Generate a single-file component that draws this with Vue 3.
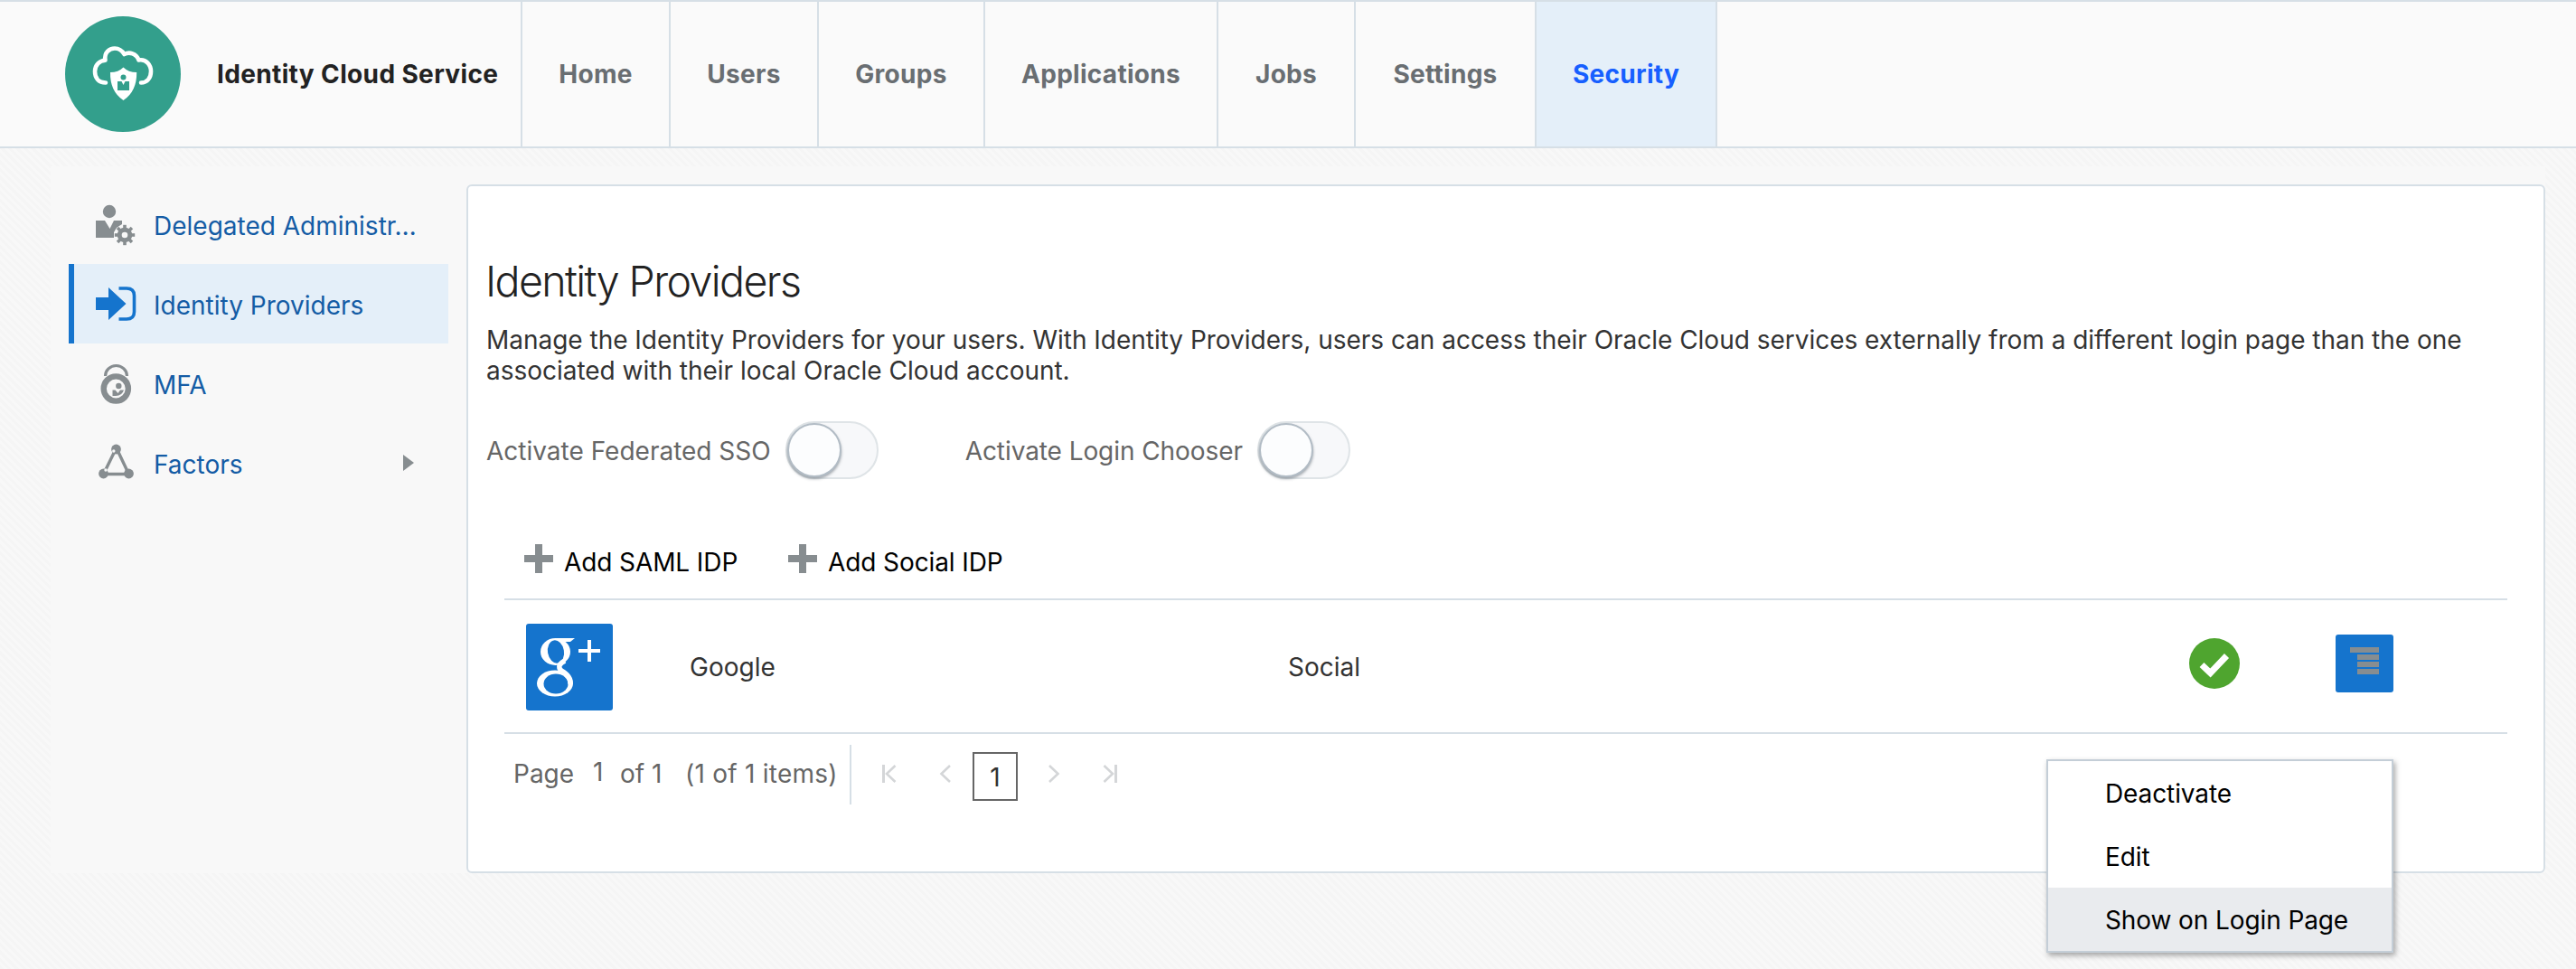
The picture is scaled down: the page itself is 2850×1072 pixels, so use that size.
<script setup>
const tabs = [
  { label: 'Home', w: 164 },
  { label: 'Users', w: 164 },
  { label: 'Groups', w: 184 },
  { label: 'Applications', w: 258 },
  { label: 'Jobs', w: 152 },
  { label: 'Settings', w: 200 },
  { label: 'Security', w: 200, active: true },
]
const side = [
  { label: 'Delegated Administr…', icon: 'admin' },
  { label: 'Identity Providers', icon: 'idp', active: true },
  { label: 'MFA', icon: 'mfa' },
  { label: 'Factors', icon: 'factors', more: true },
]
const toggles = ['Activate Federated SSO', 'Activate Login Chooser']
const menu = ['Deactivate', 'Edit', 'Show on Login Page']
const teeth = [0, 45, 90, 135, 180, 225, 270, 315]
</script>

<template>
  <div class="page">
    <header class="header">
      <div class="brand">
        <svg class="logo" viewBox="0 0 128 128">
          <circle cx="64" cy="64" r="64" fill="#339f8c" />
          <path d="M45 73.500C37 73.500 33 68 33 61C33 54 38 49 44.500 48.700C43 40 49 35.500 55 35.500C60 35.500 63 38 65.500 42C71 39 79 41 81.500 48.500C90 47 95 54 95 61C95 68 91 73.500 84 73.500" fill="none" stroke="#fff" stroke-width="4.600" stroke-linecap="round" stroke-linejoin="round" />
          <path d="M64.500 56.500Q70 62 79.200 62Q79.500 83 64.500 93Q49.500 83 50 62Q59 62 64.500 56.500Z" fill="#fff" />
          <circle cx="64.500" cy="67.500" r="3" fill="#339f8c" />
          <path d="M58 72H62.500L64.500 76L66.500 72H71V82H58Z" fill="#339f8c" />
        </svg>
        <span class="brand-name">Identity Cloud Service</span>
      </div>
      <nav class="tabs">
        <a v-for="t in tabs" :key="t.label" class="tab" :class="{ active: t.active }" :style="{ width: t.w + 'px' }">{{ t.label }}</a>
      </nav>
    </header>

    <div class="body">
      <aside class="side">
        <div v-for="s in side" :key="s.label" class="side-item" :class="{ active: s.active }">
          <svg v-if="s.icon === 'admin'" class="side-icon" viewBox="0 0 48 48" fill="#878d90">
            <circle cx="17" cy="10" r="7.200" />
            <path d="M2 20H12L17.500 29L22 20H31V24L25 28L22 33V39H2Z" />
            <g transform="translate(34 36)">
              <circle r="11.500" fill="#f8f8f8" />
              <circle r="5.800" fill="none" stroke="#878d90" stroke-width="5" />
              <rect v-for="a in teeth" :key="a" x="-1.800" y="-11.200" width="3.600" height="4" :transform="`rotate(${a})`" />
            </g>
          </svg>
          <svg v-else-if="s.icon === 'idp'" class="side-icon" viewBox="0 0 48 48">
            <path d="M2 17H16V6L35.500 24L16 42V31H2Z" fill="#1574cd" />
            <path d="M27.500 7H36Q44.500 7 44.500 15V33Q44.500 41 36 41H27.500" fill="none" stroke="#1574cd" stroke-width="3.600" />
          </svg>
          <svg v-else-if="s.icon === 'mfa'" class="side-icon" viewBox="0 0 48 48">
            <path d="M12.500 16A12 11.500 0 0 1 36.500 16" fill="none" stroke="#878d90" stroke-width="3.200" />
            <circle cx="24.300" cy="30" r="13.600" fill="#f8f8f8" stroke="#878d90" stroke-width="6.400" />
            <circle cx="27.300" cy="27" r="3.200" fill="#878d90" />
            <path d="M20.500 31.500H23.500L26.500 35L29 31.500H33Q31 38 24 38H20.500Z" fill="#878d90" />
          </svg>
          <svg v-else class="side-icon" viewBox="0 0 48 48">
            <path d="M24.500 8L11 35.500M25 8L38 35.500M11 36.500H38" fill="none" stroke="#878d90" stroke-width="3.400" />
            <circle cx="24.500" cy="9" r="5.400" fill="#878d90" />
            <circle cx="10.500" cy="36" r="5.400" fill="#878d90" />
            <circle cx="38.500" cy="36" r="5.400" fill="#878d90" />
            <circle cx="21.800" cy="11" r="1.700" fill="#f8f8f8" />
            <circle cx="13" cy="32" r="1.700" fill="#f8f8f8" />
          </svg>
          <span class="side-label">{{ s.label }}</span>
          <svg v-if="s.more" class="more" viewBox="0 0 12 18"><path d="M0 0L12 9L0 18Z" fill="#878d90" /></svg>
        </div>
      </aside>

      <main class="panel">
        <h1>Identity Providers</h1>
        <p class="desc">Manage the Identity Providers for your users. With Identity Providers, users can access their Oracle Cloud services externally from a different login page than the one<br>associated with their local Oracle Cloud account.</p>
        <div class="toggles">
          <label v-for="t in toggles" :key="t" class="toggle-field">
            <span>{{ t }}</span>
            <i class="switch"><b class="knob"></b></i>
          </label>
        </div>

        <section class="list">
          <div class="toolbar">
            <a class="add add1"><i class="plus"></i><span>Add SAML IDP</span></a>
            <a class="add"><i class="plus"></i><span>Add Social IDP</span></a>
          </div>
          <div class="row">
            <svg class="gplus" viewBox="0 0 96 96">
              <rect width="96" height="96" rx="3" fill="#1574cd" />
              <ellipse cx="32.500" cy="31" rx="16.500" ry="15" fill="#fff" />
              <ellipse cx="33" cy="31" rx="9" ry="12.800" fill="#1574cd" transform="rotate(-10 33 31)" />
              <path d="M32 16H54L49 20H39Z" fill="#fff" />
              <ellipse cx="32" cy="66" rx="20" ry="14.500" fill="#fff" />
              <ellipse cx="33" cy="66.500" rx="13.500" ry="11" fill="#1574cd" />
              <path d="M43 41Q33 46 39 52Q50 58 49 67" fill="none" stroke="#fff" stroke-width="5.500" />
              <path d="M58 30H82M70 18V42" fill="none" stroke="#fff" stroke-width="4" />
            </svg>
            <span class="c-name">Google</span>
            <span class="c-type">Social</span>
            <svg class="check" viewBox="0 0 56 56">
              <circle cx="28" cy="28" r="28" fill="#4fa52f" />
              <path d="M14 29.500L23.500 38.500L41.500 19.500" fill="none" stroke="#fff" stroke-width="7" />
            </svg>
            <span class="menu-btn"><i></i><i></i><i></i><i></i></span>
          </div>
          <div class="pager">
            <span class="pg-a">Page</span><span class="pg-b">1</span><span class="pg-c">of 1</span><span class="pg-d">(1 of 1 items)</span>
            <span class="pg-nav">
              <svg width="17" height="22" viewBox="0 0 17 22"><path d="M2.500 1V21" /><path d="M15.500 2L6 11L15.500 20" class="thin" /></svg>
              <svg width="14" height="22" viewBox="0 0 14 22"><path d="M12 2L2.500 11L12 20" class="thin" /></svg>
              <b class="cur">1</b>
              <svg width="14" height="22" viewBox="0 0 14 22"><path d="M2 2L11.500 11L2 20" class="thin" /></svg>
              <svg width="17" height="22" viewBox="0 0 17 22"><path d="M14.500 1V21" /><path d="M1.500 2L11 11L1.500 20" class="thin" /></svg>
            </span>
          </div>
        </section>

        <ul class="menu">
          <li v-for="(m, i) in menu" :key="m" :class="{ hover: i === 2 }">{{ m }}</li>
        </ul>
      </main>
    </div>
  </div>
</template>

<style>
body { margin: 0; background: #f7f7f7; }
</style>

<style scoped>
* { box-sizing: border-box; }
.page {
  width: 2850px; height: 1072px; overflow: hidden;
  font: 400 28px/34px Inter, "Liberation Sans", sans-serif; color: #333;
  background: repeating-linear-gradient(45deg, #f5f5f5 0 3px, #f8f8f8 3px 6px);
}
.header { display: flex; height: 164px; background: #fafafa; border-top: 2px solid #d6dfe6; border-bottom: 2px solid #d6dfe6; }
.brand { width: 578px; display: flex; align-items: center; padding-left: 72px; border-right: 2px solid #d6dfe6; }
.logo { width: 128px; height: 128px; margin-right: 40px; flex: none; }
.brand-name { font-weight: 700; color: #222; white-space: nowrap; letter-spacing: .36px; }
.tabs { display: flex; }
.tab { display: flex; align-items: center; justify-content: center; border-right: 2px solid #d6dfe6; font-weight: 700; letter-spacing: .28px; color: #696e72; white-space: nowrap; }
.tab.active { background: #e4eff9; color: #175fff; }
.body { display: flex; margin: 20px 34px 0 56px; padding-top: 20px; height: 782px; background: #f8f8f8; }
.side { width: 440px; margin-left: 20px; flex: none; }
.side-item { display: flex; align-items: center; width: 420px; height: 88px; padding-left: 22px; border-left: 6px solid transparent; color: #145ca5; white-space: nowrap; }
.side-item.active { background: #e4eff9; border-left-color: #1574cd; }
.side-icon { width: 48px; height: 48px; margin-right: 18px; flex: none; }
.side-label { padding-top: 4px; }
.more { width: 12px; height: 18px; margin-left: auto; margin-right: 38px; }
.panel { position: relative; width: 2300px; height: 762px; flex: none; background: #fff; border: 2px solid #d6dfe6; border-radius: 6px; padding: 0 40px 0 20px; }
h1 { margin: 77px 0 0 -1px; font-size: 46.500px; line-height: 56px; font-weight: 300; color: #222; letter-spacing: -1.6px; }
.desc { margin: 20px 0 0; white-space: nowrap; letter-spacing: -.02px; }
.toggles { display: flex; gap: 96px; margin-top: 39px; color: #666; }
.toggle-field { display: flex; align-items: center; gap: 16px; }
.toggle-field span { padding-top: 2px; }
.toggle-field + .toggle-field { letter-spacing: -.08px; }
.switch { display: block; width: 103px; height: 64px; border: 2px solid #dfe4e7; border-radius: 32px; background: #f7f8fa; }
.knob { display: block; width: 60px; height: 60px; border: 2px solid #b2bcc5; border-radius: 50%; background: #fcfdfe; box-shadow: 0 2px 3px rgba(80, 90, 100, .5); }
.list { margin: 56px 0 0 20px; width: 2216px; }
.toolbar { display: flex; height: 76px; padding: 16px 0 0 22px; color: #000; letter-spacing: -.1px; }
.add { display: flex; gap: 12px; }
.add1 { width: 292px; }
.add span { padding-top: 3px; white-space: nowrap; }
.plus { width: 32px; height: 32px; flex: none; background: linear-gradient(#878d90, #878d90) 50% 50% / 32px 8px no-repeat, linear-gradient(#878d90, #878d90) 50% 50% / 8px 32px no-repeat; }
.row { display: flex; align-items: flex-start; height: 150px; padding: 26px 0 0 24px; border-top: 2px solid #d6dfe6; border-bottom: 2px solid #d6dfe6; }
.gplus { width: 96px; height: 96px; }
.c-name { margin: 31px 0 0 85px; width: 662px; }
.c-type { margin-top: 31px; width: 997px; }
.check { width: 56px; height: 56px; margin-top: 16px; }
.menu-btn { width: 64px; height: 64px; margin: 12px 0 0 106px; background: #1574cd; border-radius: 3px; padding: 14px 16px; display: flex; flex-direction: column; gap: 2px; align-items: flex-end; }
.menu-btn i { width: 24px; height: 6px; background: #878d90; }
.menu-btn i:first-child { width: 32px; }
.pager { display: flex; height: 90px; padding: 12px 0 0 10px; color: #666; white-space: nowrap; }
.pager > span { padding-top: 15px; }
.pg-a { width: 88px; }
.pg-b { width: 30px; position: relative; top: -2px; }
.pg-c { width: 72px; }
.pg-d { width: 182px; letter-spacing: .25px; }
.pager > .pg-nav { display: flex; align-items: flex-start; height: 66px; border-left: 2px solid #d6dfe6; padding: 0 0 0 33px; }
.pg-nav svg { margin-top: 21px; fill: none; stroke: #d4d6d8; stroke-width: 3; }
.pg-nav svg:nth-child(2) { margin-left: 47px; }
.pg-nav svg:nth-child(4) { margin-left: 33px; }
.pg-nav svg:nth-child(5) { margin-left: 47px; }
.pg-nav .thin { stroke-width: 2.6; }
.cur { width: 50px; height: 54px; margin: 8px 0 0 23px; border: 2px solid #666; color: #333; font-weight: 400; line-height: 52px; text-align: center; }
.menu { position: absolute; left: 1746px; top: 634px; width: 384px; margin: 0; padding: 0; list-style: none; background: #fff; border: 2px solid #c4ced7; box-shadow: 2px 3px 6px rgba(0, 0, 0, .35); color: #000; letter-spacing: -.1px; }
.menu li { height: 70px; line-height: 72px; padding-left: 63px; }
.menu .hover { background: #e9ebee; }
</style>
